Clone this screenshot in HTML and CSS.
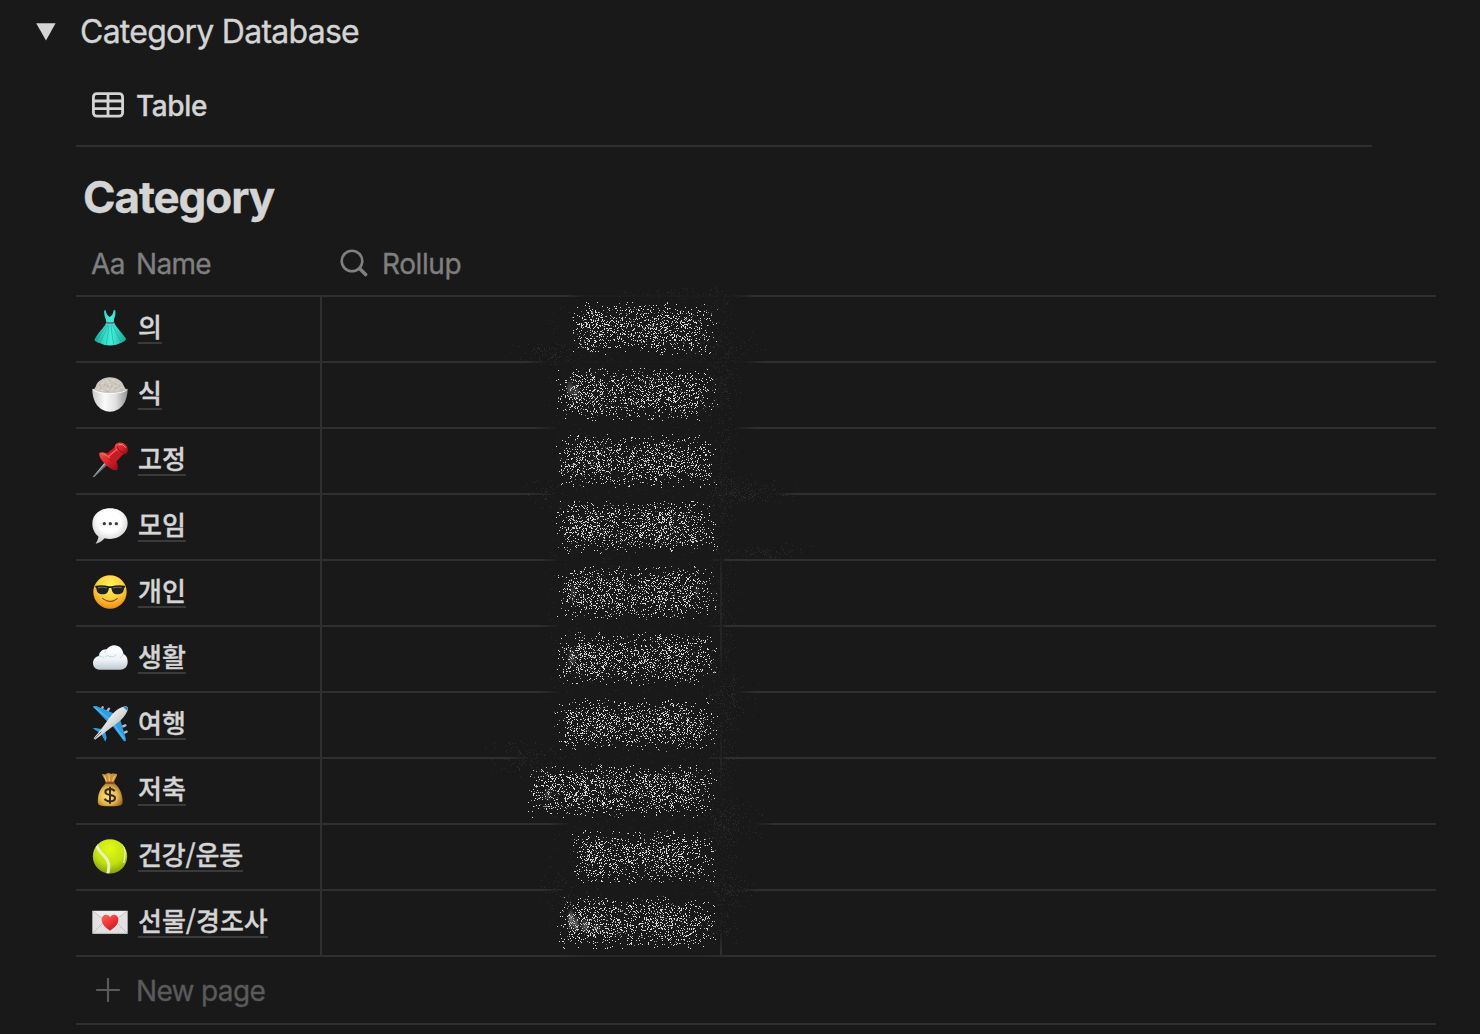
FILE: index.html
```html
<!DOCTYPE html>
<html lang="ko">
<head>
<meta charset="utf-8">
<title>Category Database</title>
<link rel="stylesheet" href="styles.css">
</head>
<body>
<main class="page">
  <header class="toggle">
    <svg class="toggle-arrow" width="20" height="18" viewBox="0 0 20 18"><path d="M.2.2h19.4L10 17.4z" fill="#d4d4d4"/></svg>
    <span class="toggle-title">Category Database</span>
  </header>

  <nav class="tabs">
    <svg class="tab-icon" width="32" height="26" viewBox="0 0 32 26" fill="none" stroke="#d4d4d4" stroke-width="2.8"><rect x="1.4" y="1.6" width="29.2" height="22.6" rx="3.4"/><path d="M1.4 9h29.2M1.4 16.6h29.2M16 1.5v22.6"/></svg>
    <span class="tab-label">Table</span>
  </nav>

  <h1 class="title">Category</h1>

  <section class="table">
    <div class="row head">
      <div class="cell name"><span class="aa">Aa</span><span class="head-name">Name</span></div>
      <div class="cell rollup"><svg class="search" width="28" height="28" viewBox="0 0 28 28" fill="none" stroke="#7f7f7f" stroke-linecap="round"><circle cx="12" cy="12" r="10.3" stroke-width="2.6"/><path d="M19.6 19.6l6 6" stroke-width="3.6"/></svg><span class="head-rollup">Rollup</span></div>
    </div>

    <div class="row">
      <div class="cell name">
        <svg class="emoji" viewBox="0 0 108 108"><defs><linearGradient id="dress"><stop offset="0" stop-color="#1a9c8f"/><stop offset=".3" stop-color="#35dcc8"/><stop offset=".55" stop-color="#40f0da"/><stop offset="1" stop-color="#1ca090"/></linearGradient></defs><path d="M37 1l4 0c1 9 5 16 12 20 8-4 11-11 12-20h5c1 10 0 17-3 24-2 5-2 9 0 14 5 13 22 26 36 49-4 6-12 10-19 12-18 9-43 9-59 0-8-2-14-5-18-10 10-23 31-37 35-51 1-5 0-9-2-14-3-7-4-15-3-24z" fill="url(#dress)"/><path d="M47 44C40 68 31 83 23 98M51 44c-2 20-6 42-8 60M57 44c2 22 5 42 8 60M61 43c9 22 18 36 27 52M43 44C34 65 23 78 15 90" fill="none" stroke="#1fa094" stroke-width="1.8"/><path d="M42 35q12 4 24 0v5q-12 3-24 0z" fill="#70566f"/></svg>
        <span class="label">의</span>
      </div>
      <div class="cell rollup"></div>
    </div>
    <div class="row">
      <div class="cell name">
        <svg class="emoji" viewBox="0 0 108 108"><defs><linearGradient id="bowl"><stop offset="0" stop-color="#c9c9c9"/><stop offset=".35" stop-color="#fafafa"/><stop offset=".65" stop-color="#e2e2e2"/><stop offset="1" stop-color="#929292"/></linearGradient></defs><path d="M1 40q53-16 106 0c-1 38-20 67-53 67S1 78 1 40z" fill="url(#bowl)"/><path d="M5 43q49 18 98 0L96 31C91 13 72 4 53 4S15 16 11 32z" fill="#cbc6be"/><g fill="none" stroke-linecap="round"><path d="M19 36l3-3M29 24l4-1M43 13l4 1M60 11l4 2M76 20l3 3M86 34l4 2M67 29l3 3M52 27l4-2M39 35l3 3M28 43l5 1M57 43l4-3M75 42l4-2M16 40l3 2M34 17l3 2M50 19l3-1M68 15l2 2M46 40l3 1M60 36l3 1" stroke="#e6e1da" stroke-width="3"/><path d="M26 33l2 2M37 24l3 2M53 14l2 2M69 22l2 3M82 29l2 2M61 30l-3 3M45 46l3 1M74 36l-3 1M23 26l1 2M90 41l-3 1M46 30l2 1" stroke="#ada69c" stroke-width="2.4"/></g><path d="M2 40q8 11 52 13 44-2 52-13" fill="none" stroke="#fff" stroke-width="2.5"/></svg>
        <span class="label">식</span>
      </div>
      <div class="cell rollup"></div>
    </div>
    <div class="row">
      <div class="cell name">
        <svg class="emoji" viewBox="0 0 108 108"><defs><linearGradient id="pin" x2="1" y2="1"><stop offset="0" stop-color="#f5524c"/><stop offset=".5" stop-color="#dd2329"/><stop offset="1" stop-color="#8e0a17"/></linearGradient></defs><path d="M40 59L2 105l5-1 40-39z" fill="#9ecbd5"/><path d="M42 64L3 105l4-1 41-37z" fill="#776c6d"/><path d="M22 33c11-8 35 4 49 23 11 16 7 32-2 29C54 83 18 51 22 33z" fill="url(#pin)"/><path d="M42 37L72 12l22 24-27 29C56 61 46 49 42 37z" fill="#c81a24"/><path d="M71 7c9-10 28-6 34 6 5 11 1 24-8 24-15 0-37-16-26-30z" fill="url(#pin)"/><path d="M50 43l25-21M29 36q12 0 24 11" stroke="#f7615b" stroke-width="4" fill="none" stroke-linecap="round"/><path d="M76 14q4 17 23 18" stroke="#8f101b" stroke-width="3" fill="none"/><path d="M80 8q14-3 21 9" stroke="#ff8b83" stroke-width="3" fill="none"/></svg>
        <span class="label">고정</span>
      </div>
      <div class="cell rollup"></div>
    </div>
    <div class="row">
      <div class="cell name">
        <svg class="emoji" viewBox="0 0 108 108"><defs><radialGradient id="bubble" cx=".48" cy=".35" r=".65"><stop offset=".5" stop-color="#fff"/><stop offset="1" stop-color="#c9c9c9"/></radialGradient></defs><path d="M54 1c31 0 53 19 53 45S83 93 54 93c-6 0-11-1-16-2-8 9-18 15-27 16 4-7 9-15 8-22C8 76 1 62 1 47 1 19 24 1 54 1z" fill="url(#bubble)"/><g fill="#3c3c3c"><circle cx="37" cy="47" r="5"/><circle cx="55" cy="47" r="5"/><circle cx="73" cy="47" r="5"/></g></svg>
        <span class="label">모임</span>
      </div>
      <div class="cell rollup"></div>
    </div>
    <div class="row">
      <div class="cell name">
        <svg class="emoji" viewBox="0 0 108 108"><defs><radialGradient id="face" cx=".5" cy=".3" r=".7"><stop offset="0" stop-color="#fff35f"/><stop offset=".55" stop-color="#ffd139"/><stop offset="1" stop-color="#f18b18"/></radialGradient></defs><circle cx="54" cy="54" r="50" fill="url(#face)"/><path d="M11 35q20-4 40 2h7q20-6 40-2l2 3-4 5c-1 14-8 18-20 18-11 0-16-6-18-19h-7c-2 13-7 19-18 19-12 0-19-4-20-18l-4-5z" fill="#202022"/><path d="M18 41q14-3 27 1M62 42q14-4 27-1" stroke="#62676b" stroke-width="3.5" fill="none"/><path d="M31 73q23 18 46 0-21 20-46 0z" fill="#794211" stroke="#794211" stroke-width="2"/></svg>
        <span class="label">개인</span>
      </div>
      <div class="cell rollup"></div>
    </div>
    <div class="row">
      <div class="cell name">
        <svg class="emoji" viewBox="0 0 108 108"><defs><linearGradient id="cloud" x2="0" y2="1"><stop offset="0" stop-color="#fff"/><stop offset=".6" stop-color="#eff3f7"/><stop offset="1" stop-color="#bcc8d3"/></linearGradient></defs><path d="M22 89C10 88 3 80 3 69s8-20 18-21c0-13 12-22 23-20 6-8 15-12 23-12 15 1 26 11 27 26 9 3 13 13 13 23 0 14-8 23-22 24z" fill="url(#cloud)"/><path d="M21 48q9-1 15 6M40 49q8-5 14 1 13 3 19-5M44 28q-5 4-6 9M94 42q-2 8-9 12" fill="none" stroke="#ccd6df" stroke-width="3" stroke-linecap="round"/></svg>
        <span class="label">생활</span>
      </div>
      <div class="cell rollup"></div>
    </div>
    <div class="row">
      <div class="cell name">
        <svg class="emoji" viewBox="0 0 108 108"><defs><linearGradient id="plane" x2="1" y2="1"><stop offset=".15" stop-color="#fff"/><stop offset=".5" stop-color="#ddd"/><stop offset="1" stop-color="#888"/></linearGradient></defs><g stroke="#b7bdc1" stroke-width="7" stroke-linecap="round"><path d="M28 10l4-6M46 15l5-7M93 61l7-3M97 80l7-3"/></g><path d="M2 1l11-1 59 25-25 23zM60 58l23-23 18 61 1 9-6 1zM2 67l9-1 29 5-12 13zM26 80l12-11 6 27-4 11z" fill="#2a9fe5"/><path d="M6 3l46 36M67 57l30 43" stroke="#55b8ef" stroke-width="4"/><path d="M100 1c7 0 9 5 6 14-6 14-18 27-31 37L33 83 9 101l-4-4 20-24 30-41C67 17 83 3 100 1z" fill="url(#plane)"/><path d="M94 4l8-3 5 5-2 8z" fill="#268dca"/><path d="M8 98l20-21" stroke="#6e6663" stroke-width="3"/></svg>
        <span class="label">여행</span>
      </div>
      <div class="cell rollup"></div>
    </div>
    <div class="row">
      <div class="cell name">
        <svg class="emoji" viewBox="0 0 108 108"><defs><radialGradient id="bag" cx=".43" cy=".55" r=".6"><stop offset="0" stop-color="#ffe67a"/><stop offset=".6" stop-color="#e6bb4c"/><stop offset="1" stop-color="#9d6c22"/></radialGradient></defs><path d="M30 6c6-1 8 3 12 0s10-4 15 0c6-3 12-1 18 0 2 6-7 15-9 24L42 31C39 21 31 13 30 6z" fill="#c8913d"/><path d="M42 34h25c12 9 20 22 24 43 3 17-1 23-10 24q-27 3-54 0c-9-1-11-8-9-22 2-20 12-36 24-45z" fill="url(#bag)"/><path d="M40 29h28v7H40z" fill="#8d4b28"/><path d="M43 29l-5-18M52 28l-1-20M61 28l7-17" stroke="#f6cf77" stroke-width="3"/><path d="M68 58c-3-5-8-7-14-7-8 0-14 3-14 9 0 13 29 5 29 18 0 7-6 10-15 10-8 0-13-3-16-8M54 44v51" fill="none" stroke="#38291b" stroke-width="6"/></svg>
        <span class="label">저축</span>
      </div>
      <div class="cell rollup"></div>
    </div>
    <div class="row">
      <div class="cell name">
        <svg class="emoji" viewBox="0 0 108 108"><defs><radialGradient id="ball" cx=".5" cy=".28" r=".75"><stop offset="0" stop-color="#e0fa18"/><stop offset=".6" stop-color="#c2e010"/><stop offset="1" stop-color="#7d9813"/></radialGradient><clipPath id="ballclip"><circle cx="54" cy="55" r="51.5"/></clipPath></defs><circle cx="54" cy="55" r="51.5" fill="url(#ball)"/><g clip-path="url(#ballclip)" fill="none" stroke="#e9efc0"><path d="M13 19c5 28 34 34 37 59 1 10 0 20-3 31" stroke-width="9"/><path d="M88 12c14 17 13 36 7 63" stroke-width="4"/></g></svg>
        <span class="label slash">건강/운동</span>
      </div>
      <div class="cell rollup"></div>
    </div>
    <div class="row">
      <div class="cell name">
        <svg class="emoji" viewBox="0 0 108 108"><defs><linearGradient id="heart" x2=".7" y2="1"><stop offset="0" stop-color="#ff6b62"/><stop offset=".5" stop-color="#f33a3a"/><stop offset="1" stop-color="#ce161e"/></linearGradient></defs><rect x="1" y="20" width="106" height="69" rx="2" fill="#e2e2e2"/><path d="M2 21l45 35q7 5 14 0l45-35M2 88l37-37M106 88L69 51" fill="#ededed" stroke="#b1b1b1" stroke-width="2"/><path d="M2 88h104" stroke="#bcbcbc" stroke-width="3"/><path d="M54 80C42 71 29 61 29 47c0-16 19-20 25-7 6-13 25-9 25 7 0 14-13 24-25 33z" fill="url(#heart)"/></svg>
        <span class="label">선물/경조사</span>
      </div>
      <div class="cell rollup"></div>
    </div>

    <div class="row new">
      <svg class="plus" width="24" height="24" viewBox="0 0 24 24" fill="none" stroke="#5a5a5a" stroke-width="2.2" stroke-linecap="round"><path d="M12 1v22M1 12h22"/></svg>
      <span class="new-label">New page</span>
    </div>
    <canvas class="dust" id="dust" width="360" height="690"></canvas>
  </section>
</main>
<script src="dust.js"></script>
</body>
</html>
```

FILE: styles.css
```css
* { box-sizing: border-box; }

body {
  margin: 0;
  background: #191919;
  color: #d4d4d4;
  font-family: Inter, "Noto Sans CJK KR", sans-serif;
  overflow: hidden;
}

.page {
  height: 1034px;
  padding: 0 44px 0 76px;
  overflow: hidden;
  -webkit-text-stroke: 0.35px currentColor;
}

.toggle {
  display: flex;
  align-items: center;
  gap: 24px;
  height: 64px;
  margin-left: -40px;
}

.toggle-arrow { margin-top: -1px; }

.toggle-title {
  font-size: 32px;
  line-height: 40px;
  letter-spacing: -0.74px;
}

.tabs {
  display: flex;
  align-items: center;
  gap: 12px;
  width: 1296px;
  height: 83px;
  padding: 2px 0 0 16px;
  border-bottom: 2px solid #2f2f2f;
}

.tab-icon { margin-top: -1px; }

.tab-label {
  padding-top: 1px;
  font-size: 28px;
  font-weight: 500;
  line-height: 34px;
  letter-spacing: -0.4px;
}

.title {
  height: 84px;
  margin: 0;
  padding: 22px 0 0 7px;
  font-size: 44px;
  font-weight: 700;
  line-height: 56px;
  letter-spacing: -1.1px;
}

.table { position: relative; }

.row {
  display: flex;
  height: 66px;
  border-bottom: 2px solid #2f2f2f;
}

.cell {
  display: flex;
  align-items: flex-start;
}

.cell.name {
  width: 246px;
  padding: 13px 0 0 16px;
  border-right: 2px solid #2f2f2f;
}

.cell.rollup {
  width: 400px;
  border-right: 2px solid #2f2f2f;
}

.row.head {
  color: #7f7f7f;
  font-size: 28px;
  line-height: 34px;
}

.head .cell {
  border-color: transparent;
  align-items: center;
  padding-top: 0;
  padding-bottom: 0;
}

.head .cell.name { padding-left: 15px; }

.head .rollup { gap: 14px; padding-left: 18px; }

.aa { width: 45px; padding-top: 1px; letter-spacing: -0.5px; }

.head-name,
.head-rollup {
  padding-top: 1px;
  letter-spacing: -0.4px;
}

.head-name { letter-spacing: -0.7px; }

.emoji {
  flex: none;
  width: 36px;
  height: 36px;
  margin-right: 10px;
}

.label {
  height: 34px;
  border-bottom: 2px solid #3a3a3a;
  font-family: "Noto Sans CJK KR", sans-serif;
  font-size: 26px;
  font-weight: 500;
  line-height: 32px;
}

.label.slash { letter-spacing: -0.15px; }

.row.new {
  align-items: center;
  gap: 16px;
  height: 68px;
  padding-left: 20px;
  color: #5a5a5a;
}

.new-label {
  padding-top: 1px;
  font-size: 28px;
  line-height: 34px;
  letter-spacing: -0.65px;
}

.dust {
  position: absolute;
  left: 404px;
  top: 49px;
}
```

FILE: dust.js
```javascript
// Spoiler dust that hides the rollup values; canvas origin is (480, 280) on the page.
const ctx = document.getElementById('dust').getContext('2d');
const OX = 480, OY = 280;

let seed = 20231;
const rnd = () => {
  seed = (seed * 1664525 + 1013904223) >>> 0;
  return seed / 4294967296;
};

const fade = (x0, x1, y0, y1, alpha, vertical) => {
  const a = vertical ? y0 : x0, b = vertical ? y1 : x1;
  const edge = Math.min(22, (b - a) / 3) / (b - a);
  const g = vertical ? ctx.createLinearGradient(0, y0 - OY, 0, y1 - OY)
                     : ctx.createLinearGradient(x0 - OX, 0, x1 - OX, 0);
  g.addColorStop(0, 'rgba(25,25,25,0)');
  g.addColorStop(edge, `rgba(25,25,25,${alpha})`);
  g.addColorStop(1 - edge, `rgba(25,25,25,${alpha})`);
  g.addColorStop(1, 'rgba(25,25,25,0)');
  ctx.fillStyle = g;
  ctx.fillRect(x0 - OX, y0 - OY, x1 - x0, y1 - y0);
};

// Grid lines dissolve under the dust.
[[565, 755, .85], [525, 765, .9], [535, 755, 1], [530, 795, 1], [540, 728, 1], [540, 728, 1],
 [540, 755, 1], [508, 726, 1], [550, 775, 1], [543, 758, 1], [565, 725, .35]]
  .forEach(([a, b, o], i) => fade(a, b, 294 + i * 66, 298 + i * 66, o, false));
fade(718, 724, 275, 575, 1, true);
fade(718, 724, 550, 680, .45, true);
fade(718, 724, 650, 750, 1, true);
fade(718, 724, 715, 810, .6, true);
fade(718, 724, 765, 950, 1, true);

const dot = (x, y, v, a) => {
  ctx.fillStyle = `rgba(${v},${v},${v},${a})`;
  ctx.fillRect(Math.round(x) - OX, Math.round(y) - OY, 1, 1);
};
const scatter = (n, x0, x1, y0, y1) => {
  for (let i = 0; i < n; i++) {
    const x = x0 + (rnd() + rnd()) / 2 * (x1 - x0);
    const y = y0 + (rnd() + rnd()) / 2 * (y1 - y0);
    dot(x, y, 46, .5 + rnd() * .5);
  }
};

for (let i = 0; i < 2600; i++) dot(548 + rnd() * 190, 296 + rnd() * 648, 43, .4 + rnd() * .6);
for (let i = 0; i < 900; i++) dot(705 + (rnd() + rnd()) * 16, 292 + rnd() * 645, 44, .5 + rnd() * .5);
scatter(110, 660, 765, 330, 366);
scatter(100, 510, 600, 340, 366);
scatter(90, 700, 745, 350, 420);
scatter(110, 700, 760, 470, 515);
scatter(130, 710, 800, 478, 508);
scatter(60, 520, 570, 475, 510);
scatter(90, 710, 815, 542, 562);
scatter(110, 695, 765, 670, 725);
scatter(160, 482, 570, 738, 776);
scatter(160, 690, 770, 800, 846);
scatter(110, 700, 765, 870, 910);
scatter(60, 535, 580, 870, 910);
scatter(60, 600, 750, 286, 298);

// One cloud of bright particles for each value.
[571, 555, 555, 553, 556, 556, 554, 528, 572, 556].forEach((left, i) => {
  const right = 717, mid = 327.5 + i * 66;
  for (let y = -26; y <= 27; y++) {
    for (let x = left; x <= right; x++) {
      const e = Math.min(1, (x - left) / 18 + .08, (right - x) / 28 + .1);
      const v = Math.min(1, (28 - Math.abs(y)) / 20);
      const wave = .93 + .12 * Math.cos((x - 590) / 11.5);
      if (rnd() < .24 * e * v * wave) {
        const t = rnd();
        dot(x, mid + y, t < .75 ? 218 : 90 + Math.floor(rnd() * 100), 1);
      }
    }
  }
});

// Soft traces of the first characters.
const smudge = (x, y, rx, ry, a) => {
  ctx.save();
  ctx.translate(x - OX, y - OY);
  ctx.scale(rx, ry);
  const g = ctx.createRadialGradient(0, 0, 0, 0, 0, 1);
  g.addColorStop(0, `rgba(190,190,190,${a})`);
  g.addColorStop(1, 'rgba(190,190,190,0)');
  ctx.fillStyle = g;
  ctx.fillRect(-1, -1, 2, 2);
  ctx.restore();
};
smudge(570, 389, 4, 9, .4);
smudge(576, 392, 5, 10, .3);
smudge(573, 592, 4, 10, .2);
smudge(697, 592, 3, 9, .2);
smudge(572, 658, 5, 10, .3);
smudge(548, 795, 4, 8, .25);
smudge(571, 919, 4, 11, .6);
smudge(576, 924, 4, 9, .45);
smudge(585, 926, 5, 8, .4);
smudge(597, 928, 6, 6, .25);
ctx.fillStyle = '#888';
ctx.fillRect(543 - OX, 806 - OY, 5, 1);
```
